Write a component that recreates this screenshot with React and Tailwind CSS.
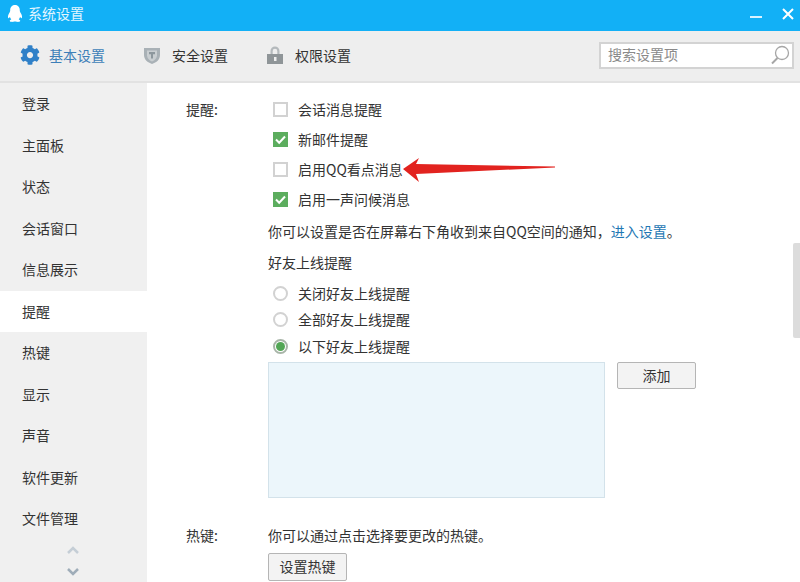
import React from 'react';
import { FaCog } from 'react-icons/fa';

const menuItems = ['登录', '主面板', '状态', '会话窗口', '信息展示', '提醒', '热键', '显示', '声音', '软件更新', '文件管理'];

function Penguin() {
    return (
        <svg width="16" height="20" viewBox="0 0 16 20" className="shrink-0">
            <path d="M8 1C4.6 1 3.2 3.6 3.2 6.4 3.2 7.6 2.6 8.4 2 9.6 1 11.4.7 13 1.200 14c.4.5 1.100-.1 1.700-1 .3 1 .8 1.800 1.400 2.400-1 .4-1.800 1-1.600 1.700.3.800 2.300 1 3.700.7.600-.2 1-.4 1.600-.4s1 .2 1.600.4c1.400.3 3.400.1 3.700-.7.2-.7-.6-1.300-1.600-1.700.6-.6 1.100-1.400 1.400-2.400.6.900 1.300 1.500 1.700 1 .5-1 .2-2.600-.8-4.400-.6-1.200-1.200-2-1.200-3.200C12.800 3.600 11.400 1 8 1z" fill="#fff" />
        </svg>
    );
}

function Shield() {
    return (
        <svg width="18" height="19" viewBox="0 0 18 19">
            <path d="M1 2h16v7c0 4.500-3.500 7.500-8 9-4.500-1.500-8-4.500-8-9z" fill="#a9b1b6" />
            <path d="M4 4.500h10v4.800c0 3-2.200 5-5 6.200-2.800-1.200-5-3.200-5-6.200z" fill="#c9ced1" />
            <path d="M6 6h6v2.200h-2v4.300H8V8.200H6z" fill="#8d979d" />
        </svg>
    );
}

function Lock() {
    return (
        <svg width="18" height="20" viewBox="0 0 18 20">
            <path d="M4.500 9V6a4.500 4.500 0 0 1 9 0v3h-2.200V6a2.300 2.300 0 0 0-4.600 0v3z" fill="#b4b9bc" />
            <rect x="1" y="9" width="16" height="10" fill="#8f9598" />
            <rect x="8" y="12" width="2.500" height="4" fill="#eee" />
        </svg>
    );
}

function SearchIcon() {
    return (
        <svg width="22" height="20" viewBox="0 0 22 20" fill="none" stroke="#a6a6a6" strokeWidth="1.300">
            <circle cx="13" cy="8" r="6.500" />
            <path d="M8.500 13L3 18.500" strokeWidth="2" />
        </svg>
    );
}

function Checkbox({ checked }) {
    if (checked) {
        return (
            <span className="w-[15px] h-[15px] bg-[#5cad5e] flex items-center justify-center shrink-0">
                <svg width="13" height="13" viewBox="0 0 13 13" fill="none" stroke="#fff" strokeWidth="2">
                    <path d="M2 6.500l3.200 3.200L11 3.500" />
                </svg>
            </span>
        );
    }
    return <span className="w-[15px] h-[15px] bg-white border-2 border-[#d2d2d2] shrink-0"></span>;
}

function Radio({ checked }) {
    return (
        <span className={`w-[15px] h-[15px] rounded-full bg-white border-2 flex items-center justify-center shrink-0 ${checked ? 'border-[#a8b5a8]' : 'border-[#d2d2d2]'}`}>
            {checked && <span className="w-[9px] h-[9px] rounded-full bg-[#52a655]"></span>}
        </span>
    );
}

function CheckRow({ checked, text }) {
    return (
        <div className="h-[30px] flex items-center gap-[10px] pl-[5px]">
            <Checkbox checked={checked} />
            <span>{text}</span>
        </div>
    );
}

function RadioRow({ checked, text }) {
    return (
        <div className="h-[26.5px] flex items-center gap-[10px] pl-[5px]">
            <Radio checked={checked} />
            <span>{text}</span>
        </div>
    );
}

function App() {
    return (
        <div
            className="relative w-[800px] h-[582px] overflow-hidden bg-white text-[14px] text-[#333333] flex flex-col"
            style={{ fontFamily: '"Noto Sans CJK SC", "Liberation Sans", sans-serif' }}
        >
            {/* title bar */}
            <div className="h-[31px] bg-[#12b0f6] flex items-center pl-[7px] pr-[6px] pb-[4px] text-white shrink-0">
                <Penguin />
                <span className="ml-[5px] text-[#e3f6ff]">系统设置</span>
                <div className="ml-auto flex items-center gap-[20px]">
                    <span className="w-[12px] h-[2px] bg-[#d8f2ff] mt-[6px]"></span>
                    <svg width="12" height="12" viewBox="0 0 12 12" stroke="#fff" strokeWidth="2">
                        <path d="M1 1l10 10M11 1L1 11" />
                    </svg>
                </div>
            </div>

            {/* toolbar */}
            <div className="h-[52px] bg-[#eeeeee] border-b-2 border-[#e2e2e2] flex items-center shrink-0 pb-[2px]">
                <div className="flex items-center pl-[20px]">
                    <FaCog size={20} color="#2f80c8" />
                    <span className="ml-[9px] text-[#3d7fb8]">基本设置</span>
                </div>
                <div className="flex items-center ml-[38px]">
                    <Shield />
                    <span className="ml-[11px]">安全设置</span>
                </div>
                <div className="flex items-center ml-[38px]">
                    <Lock />
                    <span className="ml-[11px]">权限设置</span>
                </div>
                <div className="ml-auto mr-[6px] w-[195px] h-[27px] bg-white border-2 border-[#d3d3d3] flex items-center justify-between pl-[7px] pr-[1px] text-[#8a8a8a]">
                    <span className="-mt-[1px]">搜索设置项</span>
                    <SearchIcon />
                </div>
            </div>

            <div className="flex flex-1 min-h-0">
                {/* sidebar */}
                <div className="w-[147px] bg-[#f0f0f0] shrink-0 flex flex-col">
                    {menuItems.map((item) => (
                        <div
                            key={item}
                            className={`h-[41.5px] flex items-center pl-[22px] shrink-0 ${item === '提醒' ? 'bg-white' : ''}`}
                        >
                            {item}
                        </div>
                    ))}
                    <div className="flex flex-col items-center gap-[14px] pt-[6px] pr-[2px]">
                        <svg width="14" height="8" viewBox="0 0 14 8" fill="none" stroke="#c5ced6" strokeWidth="2.500">
                            <path d="M2 7l5-5 5 5" />
                        </svg>
                        <svg width="14" height="8" viewBox="0 0 14 8" fill="none" stroke="#9fadb9" strokeWidth="2.500">
                            <path d="M2 1l5 5 5-5" />
                        </svg>
                    </div>
                </div>

                {/* content */}
                <div className="flex-1 flex pt-[11px] pl-[39px]">
                    <div className="w-[82px] shrink-0 h-[30px] flex items-center">提醒:</div>
                    <div className="flex-1 min-w-0">
                        <CheckRow text="会话消息提醒" />
                        <CheckRow checked text="新邮件提醒" />
                        <CheckRow text="启用QQ看点消息" />
                        <CheckRow checked text="启用一声问候消息" />
                        <div className="h-[34px] flex items-center">
                            你可以设置是否在屏幕右下角收到来自QQ空间的通知，<span className="text-[#1f78b4]">进入设置</span>。
                        </div>
                        <div className="h-[32px] pb-[3px] flex items-center">好友上线提醒</div>
                        <RadioRow text="关闭好友上线提醒" />
                        <RadioRow text="全部好友上线提醒" />
                        <RadioRow checked text="以下好友上线提醒" />
                        <div className="flex items-start mt-[2px]">
                            <div className="w-[337px] h-[136px] bg-[#ecf6fb] border border-[#d3e2ea]"></div>
                            <button className="ml-[12px] w-[79px] h-[27px] bg-[#f3f3f3] border border-[#b5b5b5] rounded-[2px] text-[#333333]">添加</button>
                        </div>
                        <div className="mt-[29px] h-[18px] flex items-center -ml-[82px]">
                            <span className="w-[82px] shrink-0">热键:</span>
                            <span>你可以通过点击选择要更改的热键。</span>
                        </div>
                        <button className="mt-[8px] w-[79px] h-[28px] bg-[#f3f3f3] border border-[#b5b5b5] rounded-[2px] text-[#333333]">设置热键</button>
                    </div>
                </div>
            </div>

            {/* scrollbar thumb */}
            <div className="absolute right-0 top-[243px] w-[7px] h-[95px] bg-[#dcdcdc] rounded-tl-[2px] rounded-bl-[2px]"></div>

            {/* red annotation arrow */}
            <svg className="absolute left-[400px] top-[155px]" width="160" height="30" viewBox="0 0 160 30">
                <path d="M3 14L19 3 16 9 155 11.500 155 12.500 16 19 19 27z" fill="#e2231f" />
            </svg>
        </div>
    );
}

export default App;
